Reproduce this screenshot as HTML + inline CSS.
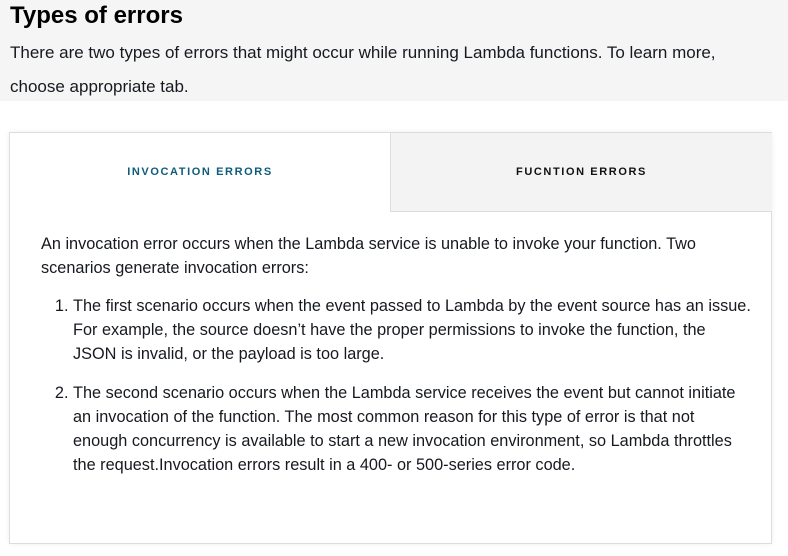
<!DOCTYPE html>
<html><head><style>
body{margin:0;width:788px;height:556px;background:#fff;font-family:"Liberation Sans",sans-serif;color:#16191f;overflow:hidden;position:relative}
.top{position:absolute;left:0;top:0;width:788px;height:101px;background:#f5f5f5}
h1{position:absolute;left:10px;top:1px;margin:0;font-size:24px;line-height:30px;font-weight:bold;color:#000}
.intro{position:absolute;left:10px;top:36px;width:775px;font-size:17px;line-height:34px;color:#16191f;white-space:nowrap}
.card{position:absolute;left:9px;top:132px;width:761px;height:410px;border:1px solid #ddd;background:#fff;box-shadow:0 0 6px rgba(0,0,0,.06)}
.tab1{position:absolute;left:0;top:0;width:380px;height:79px;text-align:center;line-height:79px;font-size:11px;font-weight:bold;letter-spacing:1.6px;color:#0e5b7a}
.tab2{position:absolute;left:380px;top:0;width:381px;height:78px;background:#f3f3f3;border-left:1px solid #ddd;border-bottom:1px solid #ddd;text-align:center;line-height:78px;font-size:11px;font-weight:bold;letter-spacing:1.6px;color:#111}
.body{position:absolute;left:31px;top:99px;width:725px;font-size:16.3px;line-height:24px;white-space:nowrap}
ol{margin:14px 0 0 0;padding-left:32px}
li{margin-bottom:15px}
</style></head><body>
<div class="top"></div>
<h1>Types of errors</h1>
<div class="intro">There are two types of errors that might occur while running Lambda functions. To learn more,<br>choose appropriate tab.</div>
<div class="card">
<div class="tab1">INVOCATION ERRORS</div>
<div class="tab2">FUCNTION ERRORS</div>
<div class="body">An invocation error occurs when the Lambda service is unable to invoke your function. Two<br>scenarios generate invocation errors:
<ol>
<li>The first scenario occurs when the event passed to Lambda by the event source has an issue.<br>For example, the source doesn’t have the proper permissions to invoke the function, the<br>JSON is invalid, or the payload is too large.</li>
<li>The second scenario occurs when the Lambda service receives the event but cannot initiate<br>an invocation of the function. The most common reason for this type of error is that not<br>enough concurrency is available to start a new invocation environment, so Lambda throttles<br>the request.Invocation errors result in a 400- or 500-series error code.</li>
</ol></div>
</div>
</body></html>
